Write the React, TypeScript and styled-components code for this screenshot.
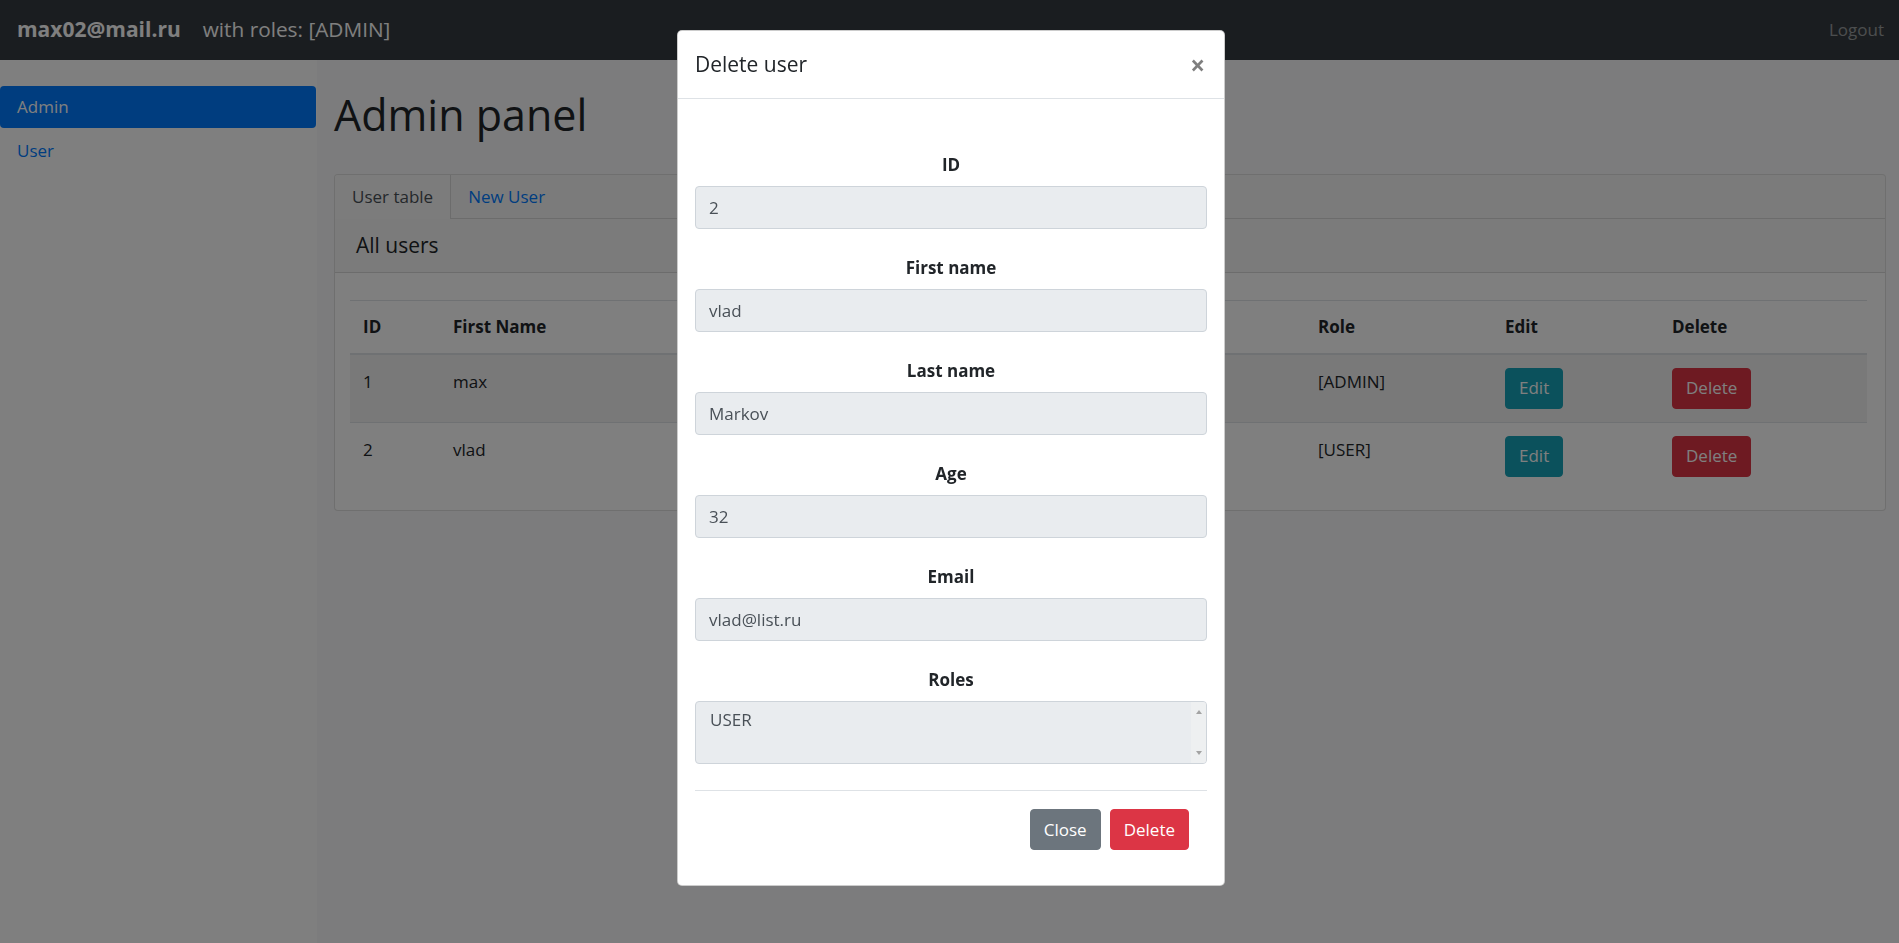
import React from "react";
import styled, { createGlobalStyle } from "styled-components";

const GlobalStyle = createGlobalStyle`
  * { box-sizing: border-box; }
  html, body { margin: 0; padding: 0; }
  body {
    font-family: "Open Sans", "Noto Sans", sans-serif;
    font-size: 17px;
    line-height: 1.5;
    color: #212529;
    background: #fff;
    overflow: hidden;
  }
`

const Navbar = styled.nav`
  height: 60px;
  background: #343a40;
  display: flex;
  align-items: center;
  padding: 0 15px 0 17px;
`
const Brand = styled.span`
  font-size: 21px;
  font-weight: 700;
  color: #fff;
  margin-right: 22px;
`
const NavText = styled.span`
  font-size: 20.8px;
  color: #fff;
`
const Logout = styled.a`
  margin-left: auto;
  color: rgba(255, 255, 255, 0.5);
  font-size: 17px;
  text-decoration: none;
`

const Layout = styled.div`
  display: flex;
  min-height: calc(100vh - 60px);
`
const Sidebar = styled.aside`
  width: 317px;
  flex-shrink: 0;
  background: #fff;
  padding: 26px 1px 0 0;
`
const SideLink = styled.a<{ $active?: boolean }>`
  display: block;
  height: 42px;
  line-height: 42px;
  padding: 0 17px;
  border-radius: 4px;
  text-decoration: none;
  background: ${(p) => (p.$active ? "#007bff" : "transparent")};
  color: ${(p) => (p.$active ? "#fff" : "#007bff")};
  margin-bottom: ${(p) => (p.$active ? "2px" : "0")};
`

const Main = styled.main`
  flex: 1;
  background: #f8f9fa;
  padding: 30px 13px 30px 17px;
`
const Title = styled.h1`
  margin: 0 0 34px;
  font-size: 43px;
  font-weight: 400;
  line-height: 50px;
`

const Panel = styled.section`
  border: 1px solid rgba(0, 0, 0, 0.125);
  border-radius: 4px;
  background: #fff;
  overflow: hidden;
`
const TabBar = styled.div`
  display: flex;
  height: 44px;
  background: rgba(0, 0, 0, 0.03);
  border-bottom: 1px solid rgba(0, 0, 0, 0.125);
`
const Tab = styled.a<{ $active?: boolean }>`
  display: block;
  padding: 0 17px;
  line-height: 43px;
  text-decoration: none;
  color: ${(p) => (p.$active ? "#495057" : "#007bff")};
  background: ${(p) => (p.$active ? "#f9f9f9" : "transparent")};
  border-right: ${(p) => (p.$active ? "1px solid rgba(0, 0, 0, 0.125)" : "none")};
  height: ${(p) => (p.$active ? "44px" : "43px")};
`
const CardHeader = styled.div`
  height: 54px;
  display: flex;
  align-items: center;
  padding: 0 20px 0 21px;
  font-size: 21px;
  background: rgba(0, 0, 0, 0.03);
  border-bottom: 1px solid rgba(0, 0, 0, 0.125);
`
const CardBody = styled.div`
  padding: 27px 18px 20px 15px;
`

const Table = styled.table`
  width: 100%;
  border-collapse: collapse;
  table-layout: fixed;
`
const Th = styled.th`
  text-align: left;
  font-weight: 700;
  padding: 13px;
  border-top: 1px solid #dee2e6;
  border-bottom: 2px solid #dee2e6;
  vertical-align: bottom;
  white-space: nowrap;
`
const Tr = styled.tr<{ $striped?: boolean }>`
  background: ${(p) => (p.$striped ? "rgba(0, 0, 0, 0.05)" : "transparent")};
`
const Td = styled.td`
  padding: 14px 13px 13px;
  border-top: 1px solid #dee2e6;
  vertical-align: top;
  white-space: nowrap;
  overflow: hidden;
`

const variants: Record<string, string> = {
  info: "#17a2b8",
  danger: "#dc3545",
  secondary: "#6c757d",
}

const Btn = styled.button<{ $variant: string }>`
  height: 41px;
  padding: 0 13px;
  font-family: inherit;
  font-size: 17px;
  line-height: 1.5;
  color: #fff;
  background: ${(p) => variants[p.$variant]};
  border: 1px solid ${(p) => variants[p.$variant]};
  border-radius: 4px;
  cursor: pointer;
`
const CellBtn = styled(Btn)`
  margin-top: -1px;
`

const Backdrop = styled.div`
  position: fixed;
  inset: 0;
  background: rgba(0, 0, 0, 0.5);
  z-index: 1040;
`
const ModalWrap = styled.div`
  position: fixed;
  inset: 0;
  z-index: 1050;
  padding-left: 3px;
`
const Dialog = styled.div`
  width: 548px;
  margin: 30px auto;
  background: #fff;
  border: 1px solid rgba(0, 0, 0, 0.2);
  border-radius: 5px;
`
const ModalHeader = styled.div`
  height: 68px;
  display: flex;
  align-items: center;
  justify-content: space-between;
  padding: 0 19px 0 17px;
  border-bottom: 1px solid #dee2e6;
`
const ModalTitle = styled.h5`
  margin: 0;
  font-size: 21px;
  font-weight: 400;
  line-height: 33px;
`
const CloseX = styled.button`
  border: 0;
  background: transparent;
  padding: 0;
  font-family: inherit;
  font-size: 26px;
  font-weight: 700;
  line-height: 1;
  color: #000;
  opacity: 0.5;
  cursor: pointer;
`
const ModalBody = styled.div`
  padding: 53px 17px 17px;
`
const Group = styled.div`
  text-align: center;
  margin-bottom: 26px;
`
const Label = styled.label`
  display: block;
  font-weight: 700;
  line-height: 26px;
  margin-bottom: 8px;
`
const Field = styled.input`
  display: block;
  width: 100%;
  height: 43px;
  padding: 0 13px;
  font-family: inherit;
  font-size: 17px;
  color: #495057;
  background: #e9ecef;
  border: 1px solid #ced4da;
  border-radius: 4px;
  outline: none;
`
const RolesBox = styled.div`
  display: flex;
  height: 63px;
  background: #e9ecef;
  border: 1px solid #ced4da;
  border-radius: 4px;
  text-align: left;
  overflow: hidden;
`
const RoleOption = styled.div`
  flex: 1;
  padding: 5px 14px;
  color: #495057;
`
const ScrollTrack = styled.div`
  width: 15px;
  display: flex;
  flex-direction: column;
  justify-content: space-between;
  align-items: center;
  padding: 8px 0;
  background: #eef0f1;
`
const Arrow = styled.span<{ $up?: boolean }>`
  width: 0;
  height: 0;
  border-left: 3.5px solid transparent;
  border-right: 3.5px solid transparent;
  border-bottom: ${(p) => (p.$up ? "4px solid #a3a3a3" : "none")};
  border-top: ${(p) => (p.$up ? "none" : "4px solid #a3a3a3")};
`
const ModalFooter = styled.div`
  display: flex;
  justify-content: flex-end;
  gap: 9px;
  padding: 18px;
  border-top: 1px solid #dee2e6;
`

const users = [
  { id: 1, firstName: "max", lastName: "Maximov", age: 25, email: "max02@mail.ru", role: "[ADMIN]" },
  { id: 2, firstName: "vlad", lastName: "Markov", age: 32, email: "vlad@list.ru", role: "[USER]" },
]

const fields = [
  { label: "ID", value: "2" },
  { label: "First name", value: "vlad" },
  { label: "Last name", value: "Markov" },
  { label: "Age", value: "32" },
  { label: "Email", value: "vlad@list.ru" },
]

const colWidths = [90, 240, 200, 120, 305, 187, 167, 208]

function App() {
  return (
    <>
      <GlobalStyle />
      <Navbar>
        <Brand>max02@mail.ru</Brand>
        <NavText>with roles: [ADMIN]</NavText>
        <Logout href="#">Logout</Logout>
      </Navbar>
      <Layout>
        <Sidebar>
          <SideLink $active href="#">Admin</SideLink>
          <SideLink href="#">User</SideLink>
        </Sidebar>
        <Main>
          <Title>Admin panel</Title>
          <Panel>
            <TabBar>
              <Tab $active href="#">User table</Tab>
              <Tab href="#">New User</Tab>
            </TabBar>
            <CardHeader>All users</CardHeader>
            <CardBody>
              <Table>
                <colgroup>
                  {colWidths.map((w, i) => (
                    <col key={i} style={{ width: w }} />
                  ))}
                </colgroup>
                <thead>
                  <tr>
                    <Th>ID</Th>
                    <Th>First Name</Th>
                    <Th>Last Name</Th>
                    <Th>Age</Th>
                    <Th>Email</Th>
                    <Th>Role</Th>
                    <Th>Edit</Th>
                    <Th>Delete</Th>
                  </tr>
                </thead>
                <tbody>
                  {users.map((u, i) => (
                    <Tr key={u.id} $striped={i % 2 === 0}>
                      <Td>{u.id}</Td>
                      <Td>{u.firstName}</Td>
                      <Td>{u.lastName}</Td>
                      <Td>{u.age}</Td>
                      <Td>{u.email}</Td>
                      <Td>{u.role}</Td>
                      <Td><CellBtn $variant="info">Edit</CellBtn></Td>
                      <Td><CellBtn $variant="danger">Delete</CellBtn></Td>
                    </Tr>
                  ))}
                </tbody>
              </Table>
            </CardBody>
          </Panel>
        </Main>
      </Layout>

      <Backdrop />
      <ModalWrap>
        <Dialog>
          <ModalHeader>
            <ModalTitle>Delete user</ModalTitle>
            <CloseX aria-label="Close">×</CloseX>
          </ModalHeader>
          <ModalBody>
            {fields.map((f) => (
              <Group key={f.label}>
                <Label>{f.label}</Label>
                <Field readOnly value={f.value} />
              </Group>
            ))}
            <Group>
              <Label>Roles</Label>
              <RolesBox>
                <RoleOption>USER</RoleOption>
                <ScrollTrack>
                  <Arrow $up />
                  <Arrow />
                </ScrollTrack>
              </RolesBox>
            </Group>
            <ModalFooter>
              <Btn $variant="secondary">Close</Btn>
              <Btn $variant="danger">Delete</Btn>
            </ModalFooter>
          </ModalBody>
        </Dialog>
      </ModalWrap>
    </>
  )
}

export default App
